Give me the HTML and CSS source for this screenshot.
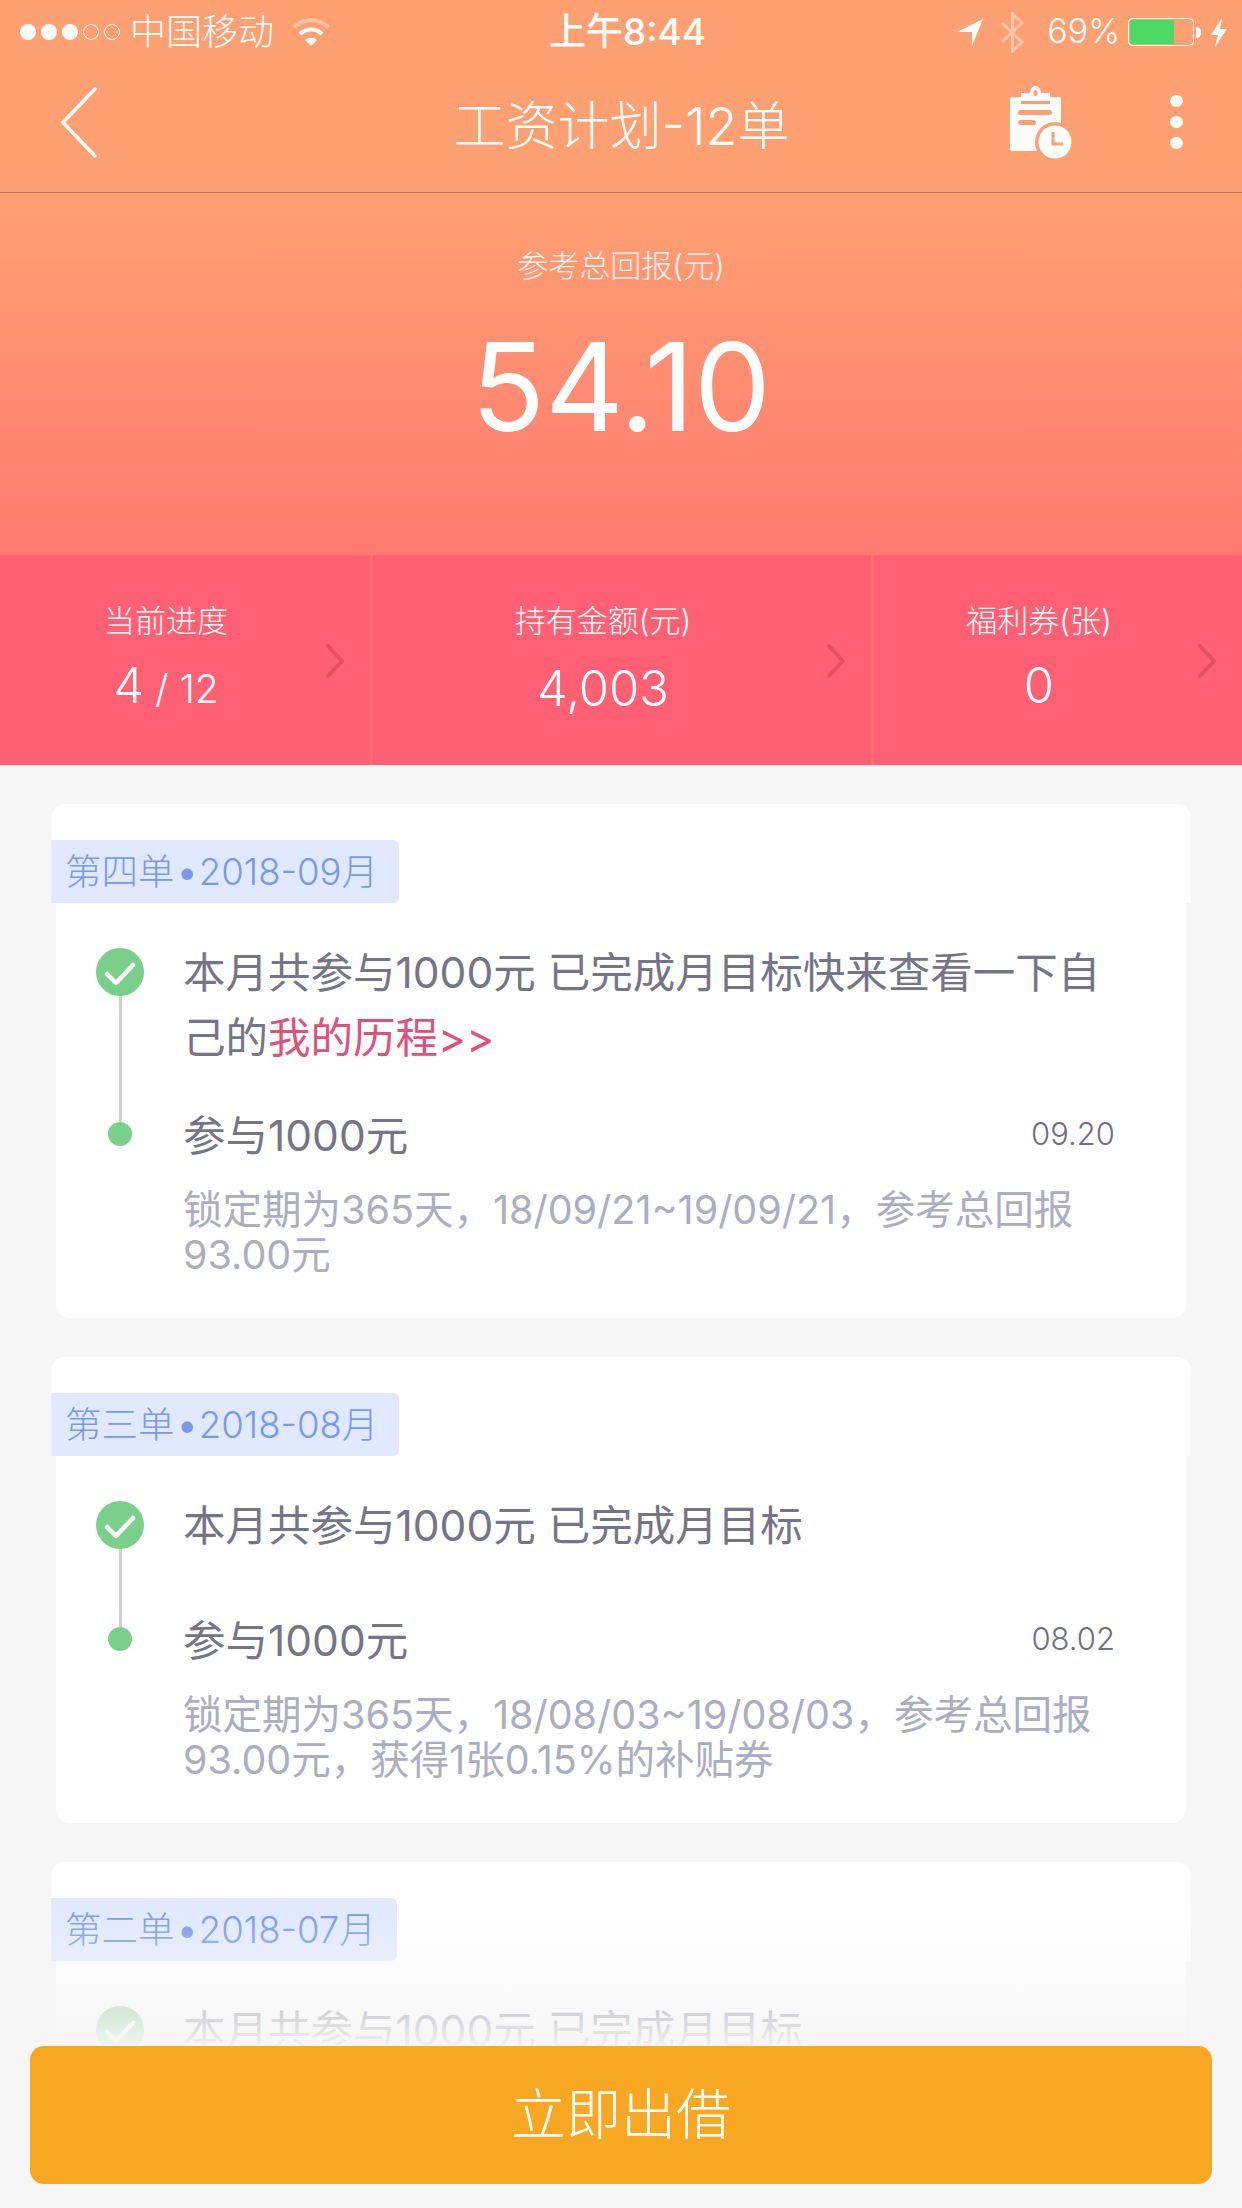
FILE: index.html
```html
<!DOCTYPE html>
<html lang="zh-CN">
<head>
    <meta charset="UTF-8">
    <meta name="viewport" content="width=device-width, initial-scale=1.0">
    <title>工资计划-12单</title>
    <link rel="stylesheet" href="styles.css">
</head>
<body>
    <div class="app">
        <div class="status">
            <div class="status-left">
                <svg width="100" height="16" viewBox="0 0 100 16">
                    <circle cx="8" cy="8" r="8" fill="#fff"/>
                    <circle cx="29" cy="8" r="8" fill="#fff"/>
                    <circle cx="50" cy="8" r="8" fill="#fff"/>
                    <circle cx="71" cy="8" r="7.5" fill="none" stroke="#fff"/>
                    <circle cx="92" cy="8" r="7.5" fill="none" stroke="#fff"/>
                </svg>
                <span class="status-text">中国移动</span>
                <svg class="wifi" width="36" height="28" viewBox="0 0 36 28">
                    <path d="M1 9 A25 25 0 0 1 35 9" fill="none" stroke="#fff" stroke-opacity=".35" stroke-width="4"/>
                    <path d="M7 16 A16 16 0 0 1 29 16" fill="none" stroke="#fff" stroke-width="4"/>
                    <path d="M12 22 L18 28 L24 22 A9 9 0 0 0 12 22 Z" fill="#fff"/>
                </svg>
            </div>
            <div class="status-time">上午8:44</div>
            <div class="status-right">
                <svg width="26" height="28" viewBox="0 0 26 28"><path d="M0 14 L26 1 L15 28 L15 14 Z" fill="#fff"/></svg>
                <svg width="23" height="41" viewBox="0 0 23 41"><path d="M1 11 L21 30 L11.5 39 L11.5 2 L21 11 L1 30" fill="none" stroke="#fff" stroke-opacity=".4" stroke-width="3"/></svg>
                <span class="pct">69%</span>
                <svg class="battery" width="73" height="28" viewBox="0 0 73 28">
                    <rect x=".5" y=".5" width="65" height="27" rx="4" fill="none" stroke="#fff"/>
                    <rect x="2" y="2" width="44" height="24" rx="2" fill="#4cd964"/>
                    <path d="M68 9 A5 5 0 0 1 68 20 Z" fill="#fff"/>
                </svg>
                <svg width="16" height="29" viewBox="0 0 16 29"><path d="M11 0 L0 17 L7 17 L4 29 L16 11 L9 11 Z" fill="#fff"/></svg>
            </div>
        </div>

        <div class="nav">
            <div class="nav-side">
                <svg width="38" height="71" viewBox="0 0 38 71"><path d="M35 2 L3 35.500 L35 69" fill="none" stroke="#fff" stroke-width="3.500" stroke-linecap="round" stroke-linejoin="round"/></svg>
            </div>
            <h1 class="nav-title">工资计划-12单</h1>
            <div class="nav-side nav-right">
                <svg width="64" height="74" viewBox="0 0 64 74">
                    <path d="M3 12 H12 V19 H41 V12 H50 A2 2 0 0 1 52 14 V66 H3 A2 2 0 0 1 1 64 V14 A2 2 0 0 1 3 12 Z" fill="#fff"/>
                    <path d="M12 8 H21 A5.500 7 0 0 1 32 8 H41 V16 H12 Z" fill="#fff"/>
                    <ellipse cx="26.500" cy="8" rx="2" ry="3" fill="#ffa072"/>
                    <rect x="9" y="25" width="34" height="5" rx="2.500" fill="#ffa072"/>
                    <rect x="9" y="35" width="18" height="5" rx="2.500" fill="#ffa072"/>
                    <circle cx="46" cy="57" r="20" fill="#ffa072"/>
                    <circle cx="46" cy="57" r="16.500" fill="#fff"/>
                    <path d="M44 47 V59 H54" fill="none" stroke="#ffa072" stroke-width="3"/>
                </svg>
                <div class="more"><i></i><i></i><i></i></div>
            </div>
        </div>

        <div class="hero">
            <p class="hero-label">参考总回报(元)</p>
            <p class="hero-value">54.10</p>
        </div>

        <div class="stats">
            <div class="stat stat-a">
                <p class="stat-label">当前进度</p>
                <p class="stat-value">4<span class="stat-of"> / 12</span></p>
                <svg class="stat-arrow" width="18" height="34" viewBox="0 0 18 34"><path d="M2 2 L16 17 L2 32" fill="none" stroke="#e4505f" stroke-width="4" stroke-linecap="round" stroke-linejoin="round"/></svg>
            </div>
            <div class="stat stat-b">
                <p class="stat-label">持有金额(元)</p>
                <p class="stat-value stat-low">4,003</p>
                <svg class="stat-arrow" width="18" height="34" viewBox="0 0 18 34"><path d="M2 2 L16 17 L2 32" fill="none" stroke="#e4505f" stroke-width="4" stroke-linecap="round" stroke-linejoin="round"/></svg>
            </div>
            <div class="stat stat-c">
                <p class="stat-label">福利券(张)</p>
                <p class="stat-value">0</p>
                <svg class="stat-arrow" width="18" height="34" viewBox="0 0 18 34"><path d="M2 2 L16 17 L2 32" fill="none" stroke="#e4505f" stroke-width="4" stroke-linecap="round" stroke-linejoin="round"/></svg>
            </div>
        </div>

        <div class="list">
            <div class="card">
                <div class="card-head"><span class="tag">第四单<b class="tag-dot">•</b>2018-09月</span></div>
                <div class="card-body">
                    <div class="step step-first">
                        <div class="marker">
                            <svg width="48" height="48" viewBox="0 0 48 48"><circle cx="24" cy="24" r="24" fill="#7acf8b"/><path d="M11 26 L20 35 L37 17" fill="none" stroke="#fff" stroke-width="4.500" stroke-linecap="round" stroke-linejoin="round"/></svg>
                            <div class="rail rail-long"></div>
                        </div>
                        <p class="step-text">本月共参与1000元 已完成月目标快来查看一下自己的<span class="link">我的历程&gt;&gt;</span></p>
                    </div>
                    <div class="step">
                        <div class="marker">
                            <div class="rail rail-short"></div>
                            <div class="dot"></div>
                        </div>
                        <div class="step-main">
                            <div class="step-row">
                                <span class="step-title">参与1000元</span>
                                <span class="step-date">09.20</span>
                            </div>
                            <p class="step-desc">锁定期为365天，18/09/21~19/09/21，参考总回报93.00元</p>
                        </div>
                    </div>
                </div>
            </div>

            <div class="card">
                <div class="card-head"><span class="tag">第三单<b class="tag-dot">•</b>2018-08月</span></div>
                <div class="card-body">
                    <div class="step step-first">
                        <div class="marker">
                            <svg width="48" height="48" viewBox="0 0 48 48"><circle cx="24" cy="24" r="24" fill="#7acf8b"/><path d="M11 26 L20 35 L37 17" fill="none" stroke="#fff" stroke-width="4.500" stroke-linecap="round" stroke-linejoin="round"/></svg>
                            <div class="rail rail-long"></div>
                        </div>
                        <p class="step-text">本月共参与1000元 已完成月目标</p>
                    </div>
                    <div class="step">
                        <div class="marker">
                            <div class="rail rail-short"></div>
                            <div class="dot"></div>
                        </div>
                        <div class="step-main">
                            <div class="step-row">
                                <span class="step-title">参与1000元</span>
                                <span class="step-date">08.02</span>
                            </div>
                            <p class="step-desc">锁定期为365天，18/08/03~19/08/03，参考总回报93.00元，获得1张0.15%的补贴券</p>
                        </div>
                    </div>
                </div>
            </div>

            <div class="card">
                <div class="card-head"><span class="tag">第二单<b class="tag-dot">•</b>2018-07月</span></div>
                <div class="card-body">
                    <div class="step step-first">
                        <div class="marker">
                            <svg width="48" height="48" viewBox="0 0 48 48"><circle cx="24" cy="24" r="24" fill="#7acf8b"/><path d="M11 26 L20 35 L37 17" fill="none" stroke="#fff" stroke-width="4.500" stroke-linecap="round" stroke-linejoin="round"/></svg>
                            <div class="rail rail-long"></div>
                        </div>
                        <p class="step-text">本月共参与1000元 已完成月目标</p>
                    </div>
                </div>
            </div>
        </div>

        <div class="footer">
            <div class="lend">立即出借</div>
        </div>
    </div>
</body>
</html>
```

FILE: styles.css
```css
*{
    margin: 0;
    padding: 0;
    box-sizing: border-box;
}
body{
    background-color: #f6f6f6;
    font-family: Inter, "Noto Sans CJK SC", sans-serif;
}
.app{
    position: relative;
    width: 1242px;
    height: 2208px;
    overflow: hidden;
}

/* status bar */
.status{
    display: grid;
    grid-template-columns: 1fr auto 1fr;
    align-items: center;
    height: 60px;
    padding: 2px 15px 0 20px;
    background-color: #ffa072;
    color: #fff;
    font-size: 36px;
}
.status-left{
    display: flex;
    align-items: center;
    gap: 10px;
}
.status-text{
    margin-bottom: 6px;
    font-weight: 300;
}
.wifi{
    margin-left: 9px;
}
.status-time{
    margin-bottom: 6px;
    padding-left: 8px;
    font-weight: 500;
    font-size: 37px;
}
.status-right{
    display: flex;
    align-items: center;
    justify-content: flex-end;
    gap: 18px;
}
.pct{
    margin: 0 -10px 4px 5px;
    font-size: 34px;
    font-weight: 300;
}
.battery{
    margin-right: -8px;
}

/* nav */
.nav{
    display: grid;
    grid-template-columns: 1fr auto 1fr;
    align-items: center;
    height: 133px;
    padding: 0 59px 0 60px;
    background-color: #ffa072;
    border-bottom: 1px solid #b5785f;
    color: #fff;
}
.nav-side{
    display: flex;
    align-items: center;
    margin-bottom: 8px;
}
.nav-right{
    justify-content: flex-end;
    gap: 97px;
}
.nav-title{
    margin-bottom: 8px;
    font-size: 52px;
    font-weight: 300;
}
.more{
    display: flex;
    flex-direction: column;
    gap: 9px;
}
.more i{
    width: 13px;
    height: 12px;
    border-radius: 50%;
    background-color: #fff;
}

/* hero */
.hero{
    height: 362px;
    padding-top: 53px;
    background-image: linear-gradient(180deg, #ffa072, #ff7a70);
    color: #fff;
    text-align: center;
}
.hero-label{
    font-size: 31px;
    line-height: 40px;
    font-weight: 300;
    opacity: 0.9;
}
.hero-value{
    margin-top: 31px;
    font-size: 122px;
    line-height: 140px;
    font-weight: 400;
}

/* stats */
.stats{
    display: grid;
    grid-template-columns: 370px 1fr 368px;
    column-gap: 3px;
    height: 210px;
    background-color: #ff6f70;
    color: #fff;
}
.stat{
    position: relative;
    padding: 46px 38px 0 0;
    background-color: #ff6073;
    text-align: center;
}
.stat-label{
    font-size: 31px;
    line-height: 40px;
    font-weight: 300;
}
.stat-value{
    margin-top: 16px;
    font-size: 49px;
    line-height: 58px;
    font-weight: 300;
}
.stat-low{
    margin-top: 19px;
}
.stat-of{
    font-size: 39px;
}
.stat-arrow{
    position: absolute;
    top: 89px;
    right: 26px;
}

/* list */
.list{
    padding: 39px 51px 0;
}
.card{
    margin-bottom: 39px;
}
.card-head{
    height: 99px;
    padding-top: 36px;
    background-color: #fff;
    border-radius: 14px 14px 0 0;
}
.tag{
    display: inline-block;
    height: 63px;
    padding: 0 21px 0 14px;
    background-color: #e0e9ff;
    border-radius: 0 6px 6px 0;
    color: #7a9ae6;
    font-size: 36.5px;
    line-height: 64px;
    font-weight: 300;
}
.tag-dot{
    margin: 0 3px 0 4px;
    font-weight: 700;
}
.card-body{
    margin: 0 5px;
    padding: 37px 71px 40px 40px;
    background-color: #fff;
    border-radius: 0 0 14px 14px;
}
.step{
    display: grid;
    grid-template-columns: 48px 1fr;
    column-gap: 39px;
}
.step-first{
    min-height: 122px;
    padding-bottom: 40px;
}
.marker{
    display: flex;
    flex-direction: column;
    align-items: center;
}
.step-first .marker{
    margin: 8px 0 -40px;
}
.rail{
    width: 3px;
    background-color: #d0d0d0;
}
.rail-long{
    flex: 1;
}
.rail-short{
    height: 12px;
}
.dot{
    width: 24px;
    height: 24px;
    border-radius: 50%;
    background-color: #7acf8b;
}
.step-text{
    color: #757586;
    font-size: 42.5px;
    line-height: 65px;
    font-weight: 400;
}
.link{
    color: #e0507c;
}
.step-row{
    display: flex;
    justify-content: space-between;
    align-items: center;
    height: 44px;
}
.step-title{
    color: #757586;
    font-size: 42.5px;
    font-weight: 400;
}
.step-date{
    margin-top: 2px;
    color: #70707f;
    font-size: 31px;
    font-weight: 300;
}
.step-desc{
    margin-top: 34px;
    color: #adadc0;
    font-size: 39.5px;
    line-height: 45px;
    font-weight: 400;
}

/* bottom button over the faded list */
.footer{
    position: absolute;
    left: 0;
    right: 0;
    bottom: 0;
    height: 298px;
    display: flex;
    align-items: flex-end;
    padding: 0 30px 24px;
    background-image: linear-gradient(180deg, rgba(246, 246, 246, 0), #f6f6f6 48%);
}
.lend{
    width: 100%;
    height: 138px;
    background-color: #f8a723;
    border-radius: 14px;
    color: #fff;
    font-size: 55px;
    line-height: 136px;
    font-weight: 300;
    text-align: center;
}
```
